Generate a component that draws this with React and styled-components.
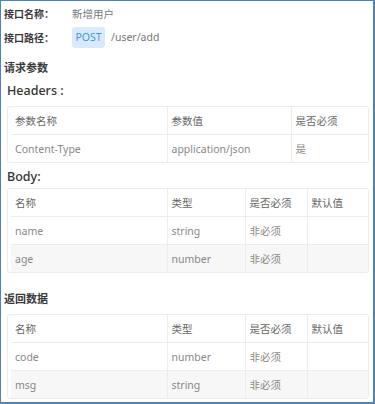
import React from 'react';
import styled, { createGlobalStyle } from 'styled-components';

const GlobalStyle = createGlobalStyle`
  html, body {
    margin: 0;
    padding: 0;
    background: #fff;
  }
  body {
    font-family: 'Noto Sans', 'Noto Sans CJK SC', sans-serif;
  }
`;

const Frame = styled.div`
  box-sizing: border-box;
  width: 375px;
  height: 404px;
  border-style: solid;
  border-color: #4f81bd;
  border-width: 1px 2px 2px 1px;
  padding: 0 0 0 3px;
  overflow: hidden;
  color: #333;
`;

const InfoRow = styled.div`
  display: flex;
  align-items: center;
  height: 24px;
`;

const InfoLabel = styled.span`
  width: 68px;
  font-size: 10px;
  font-weight: bold;
  color: #3a3a3a;
`;

const InfoValue = styled.span`
  font-size: 10.5px;
  color: #777;
`;

const MethodTag = styled.span`
  display: inline-flex;
  align-items: center;
  justify-content: center;
  width: 33px;
  height: 21px;
  margin-right: 6px;
  border-radius: 3px;
  background: #d9eafc;
  color: #3f96ee;
  font-size: 10.5px;
`;

const SectionTitle = styled.div`
  margin-top: ${(p) => p.gap || 9}px;
  line-height: 20px;
  font-size: 11px;
  font-weight: bold;
  color: #3a3a3a;
`;

const SubTitle = styled.div`
  margin-top: ${(p) => p.gap || 3}px;
  padding-left: 3px;
  line-height: 20px;
  font-size: 12.5px;
  font-weight: 500;
  color: #333;
`;

const Card = styled.div`
  box-sizing: border-box;
  width: 362px;
  margin: ${(p) => p.gap || 5}px 0 0 3px;
  padding-left: 3px;
  border: 1px solid #ececec;
  border-radius: 3px;
`;

const Table = styled.table`
  width: 100%;
  border-collapse: collapse;
  table-layout: fixed;
`;

const Cell = styled.td`
  height: 27px;
  padding: 0 0 0 4px;
  border-right: 1px solid #ececec;
  border-bottom: 1px solid #ececec;
  font-size: 10.5px;
  color: ${(p) => (p.head ? '#666' : '#888')};
  white-space: nowrap;
  overflow: hidden;

  &:last-child {
    border-right: none;
  }
`;

const Row = styled.tr`
  background: ${(p) => (p.striped ? '#f7f7f7' : '#fff')};

  &:last-child td {
    border-bottom: none;
  }
`;

const DataTable = ({ widths, head, rows }) => (
  <Table>
    <colgroup>
      {widths.map((w, i) => (
        <col key={i} style={w ? { width: w } : undefined} />
      ))}
    </colgroup>
    <tbody>
      <Row>
        {head.map((h) => (
          <Cell key={h} head>
            {h}
          </Cell>
        ))}
      </Row>
      {rows.map((r, i) => (
        <Row key={i} striped={i % 2 === 1}>
          {r.map((c, j) => (
            <Cell key={j}>{c}</Cell>
          ))}
        </Row>
      ))}
    </tbody>
  </Table>
);

const fieldWidths = [156, 78, 62, null];
const fieldHead = ['名称', '类型', '是否必须', '默认值'];

export default function App() {
  return (
    <>
      <GlobalStyle />
      <Frame>
        <InfoRow>
          <InfoLabel>接口名称：</InfoLabel>
          <InfoValue>新增用户</InfoValue>
        </InfoRow>
        <InfoRow>
          <InfoLabel>接口路径：</InfoLabel>
          <MethodTag>POST</MethodTag>
          <InfoValue>/user/add</InfoValue>
        </InfoRow>

        <SectionTitle>请求参数</SectionTitle>
        <SubTitle>Headers :</SubTitle>
        <Card>
          <DataTable
            widths={[156, 124, null]}
            head={['参数名称', '参数值', '是否必须']}
            rows={[['Content-Type', 'application/json', '是']]}
          />
        </Card>

        <SubTitle gap={4}>Body:</SubTitle>
        <Card gap={1}>
          <DataTable
            widths={fieldWidths}
            head={fieldHead}
            rows={[
              ['name', 'string', '非必须', ''],
              ['age', 'number', '非必须', ''],
            ]}
          />
        </Card>

        <SectionTitle gap={16}>返回数据</SectionTitle>
        <Card>
          <DataTable
            widths={fieldWidths}
            head={fieldHead}
            rows={[
              ['code', 'number', '非必须', ''],
              ['msg', 'string', '非必须', ''],
            ]}
          />
        </Card>
      </Frame>
    </>
  );
}
